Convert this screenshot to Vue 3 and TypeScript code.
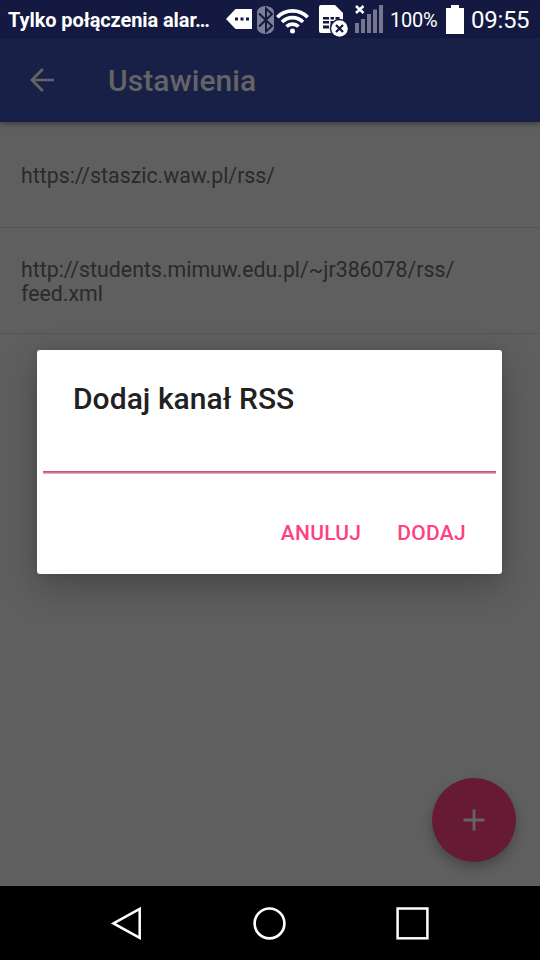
<script setup lang="ts">
import { computed, ref } from 'vue'

const feeds = ref<string[]>([
  'https://staszic.waw.pl/rss/',
  'http://students.mimuw.edu.pl/~jr386078/rss/feed.xml',
])
const dialogOpen = ref(true)
const newFeed = ref('')

// Split after the last slash so that a long address wraps before its file name.
const rows = computed(() =>
  feeds.value.map((url) => {
    const cut = url.lastIndexOf('/') + 1
    return { url, base: url.slice(0, cut), file: url.slice(cut) }
  }),
)

function closeDialog(): void {
  dialogOpen.value = false
  newFeed.value = ''
}

function addFeed(): void {
  const url = newFeed.value.trim()
  if (url) feeds.value.push(url)
  closeDialog()
}
</script>

<template>
  <div class="phone">
    <header class="status">
      <span class="carrier">Tylko połączenia alar…</span>
      <svg class="status-icons" width="160" height="38" viewBox="226 0 160 38">
        <path d="M226 19 235.500 9H252V29H235.500Z" fill="#fff" />
        <path d="M235 17.500h3v3h-3zM240.500 17.500h3v3h-3zM246 17.500h3v3h-3z" fill="#131940" />
        <rect x="257" y="6" width="17" height="28" rx="8.500" ry="6" fill="#7b7e94" />
        <path d="M259 13.500 272 26 266 31.500V8.500L272 14 259 26.500" fill="none" stroke="#131940" stroke-width="2" />
        <g fill="none" stroke="#fff" stroke-width="3.600">
          <path d="M277.300 17.200a21.500 21.500 0 0 1 30.400 0" />
          <path d="M282 22a14.900 14.900 0 0 1 21 0" />
          <path d="M286.500 26.600a8.500 8.500 0 0 1 12 0" />
        </g>
        <circle cx="292.500" cy="31" r="2.500" fill="#fff" />
        <path d="M321 5H335L343 13V33H321Q319 33 319 31V7Q319 5 321 5Z" fill="#fff" />
        <path d="M323 17h6v2.600h-6zM330.500 17h3.500v2.600h-3.500zM335.500 17h4v2.600h-4zM323 21h6v2.600h-6zM330.500 21h3v5h-3zM323 25.500h6v3h-6z" fill="#131940" />
        <circle cx="339.500" cy="28.500" r="9.700" fill="#131940" />
        <circle cx="339.500" cy="28.500" r="8.300" fill="#fff" />
        <path d="m336 25 7 7m0-7-7 7" stroke="#131940" stroke-width="2.200" />
        <path d="m356 6 7.500 7m0-7-7.500 7" stroke="#fff" stroke-width="2.500" />
        <path d="M355 23h4v10h-4zM361 19h4v14h-4zM367 14h4v19h-4zM373 9.500h4V33h-4zM379 5h4v28h-4z" fill="#74778f" />
      </svg>
      <span class="percent">100%</span>
      <svg class="battery" width="18" height="29" viewBox="0 0 18 29">
        <path d="M5 0h8v3h5v26H0V3h5z" fill="#fff" />
      </svg>
      <time class="clock">09:55</time>
    </header>

    <div class="toolbar">
      <svg class="back" width="24" height="24" viewBox="0 0 24 24">
        <path d="M24 12H2M12.800 1 1.800 12l11 11" fill="none" stroke="#646464" stroke-width="2.700" />
      </svg>
      <h1 class="title">Ustawienia</h1>
    </div>

    <main class="content">
      <ul class="feeds">
        <li v-for="row in rows" :key="row.url" class="feed">
          <span class="url">{{ row.base }}<wbr />{{ row.file }}</span>
        </li>
      </ul>
      <button class="fab" type="button" @click="dialogOpen = true">
        <svg width="22" height="22" viewBox="0 0 22 22">
          <path d="M11 .5v21M.5 11h21" stroke="#646464" stroke-width="2.800" />
        </svg>
      </button>
    </main>

    <section v-if="dialogOpen" class="dialog">
      <h2 class="dialog-title">Dodaj kanał RSS</h2>
      <input v-model="newFeed" class="field" type="text" />
      <div class="actions">
        <button class="action" type="button" @click="closeDialog">ANULUJ</button>
        <button class="action" type="button" @click="addFeed">DODAJ</button>
      </div>
    </section>

    <nav class="navbar">
      <svg width="34" height="36" viewBox="0 0 34 36">
        <path d="M4.500 18.400 30.700 3.900v29z" fill="none" stroke="#fff" stroke-width="2.500" />
      </svg>
      <svg width="34" height="36" viewBox="0 0 34 36">
        <circle cx="16.500" cy="18.400" r="14.900" fill="none" stroke="#fff" stroke-width="2.700" />
      </svg>
      <svg width="34" height="36" viewBox="0 0 34 36">
        <rect x="1.600" y="3.500" width="29.800" height="29.800" fill="none" stroke="#fff" stroke-width="2.500" />
      </svg>
    </nav>
  </div>
</template>

<style>
body {
  margin: 0;
}
</style>

<style scoped>
.phone {
  position: relative;
  display: flex;
  flex-direction: column;
  width: 540px;
  height: 960px;
  overflow: hidden;
  background: #5f5f5f;
  font-family: Roboto, "Noto Sans", sans-serif;
}

.status {
  display: flex;
  flex: none;
  align-items: center;
  height: 38px;
  padding-left: 8px;
  background: #131940;
  color: #fff;
  white-space: nowrap;
}

.carrier {
  width: 218px;
  padding-top: 2px;
  font-size: 20px;
  font-weight: 700;
  letter-spacing: -0.1px;
  line-height: 24px;
}

.status-icons {
  flex: none;
}

.percent {
  width: 56px;
  padding: 2px 0 0 4px;
  flex: none;
  font-size: 20px;
  letter-spacing: -0.2px;
  line-height: 24px;
}

.battery {
  flex: none;
}

.clock {
  margin-left: 7px;
  padding-top: 2px;
  font-size: 24px;
  letter-spacing: -0.3px;
  line-height: 28px;
}

.toolbar {
  z-index: 1;
  display: flex;
  flex: none;
  align-items: center;
  height: 84px;
  padding-left: 30px;
  box-sizing: border-box;
  background: #192048;
  box-shadow: 0 2px 5px rgba(0, 0, 0, 0.35);
}

.title {
  margin: 2px 0 0 54px;
  color: #646464;
  font-size: 30px;
  font-weight: 500;
  letter-spacing: 0.05px;
  line-height: 36px;
}

.content {
  position: relative;
  flex: 1;
}

.feeds {
  margin: 0;
  padding: 0;
  list-style: none;
}

.feed {
  display: flex;
  align-items: center;
  height: 106px;
  padding: 2px 60px 0 21px;
  box-sizing: border-box;
  border-bottom: 1px solid #545454;
}

.url {
  color: #2a2a2a;
  font-size: 21.3px;
  letter-spacing: 0.01px;
  line-height: 24px;
}

.fab {
  position: absolute;
  right: 24px;
  bottom: 24px;
  display: flex;
  align-items: center;
  justify-content: center;
  width: 84px;
  height: 84px;
  padding: 0;
  border: 0;
  border-radius: 50%;
  background: #661a34;
  box-shadow: 0 6px 12px rgba(0, 0, 0, 0.25);
}

.dialog {
  position: absolute;
  z-index: 2;
  top: 350px;
  left: 37px;
  display: flex;
  flex-direction: column;
  width: 465px;
  height: 224px;
  border-radius: 3px;
  background: #fff;
  box-shadow: 0 13px 36px rgba(0, 0, 0, 0.25), 0 0 10px rgba(0, 0, 0, 0.1);
}

.dialog-title {
  margin: 31px 36px 0;
  color: #212121;
  font-size: 30px;
  font-weight: 500;
  letter-spacing: 0.04px;
  line-height: 36px;
}

.field {
  height: 57px;
  margin: 0 6px;
  padding: 0 6px 8px;
  box-sizing: border-box;
  border: 0;
  outline: 0;
  background: linear-gradient(#b85c7d 0 1px, #dc6d94 1px 2px, #f5a3bf 2px 3px) bottom / 100% 3px no-repeat;
  font: 24px Roboto, sans-serif;
}

.actions {
  display: flex;
  justify-content: flex-end;
  gap: 36px;
  padding: 46px 36px 0;
}

.action {
  padding: 0;
  border: 0;
  background: none;
  color: #ff4081;
  font: 500 21px/26px Roboto, sans-serif;
  letter-spacing: 0.28px;
}

.navbar {
  display: flex;
  flex: none;
  align-items: center;
  justify-content: space-between;
  height: 74px;
  padding: 0 110px 0 109px;
  box-sizing: border-box;
  background: #000;
}
</style>
